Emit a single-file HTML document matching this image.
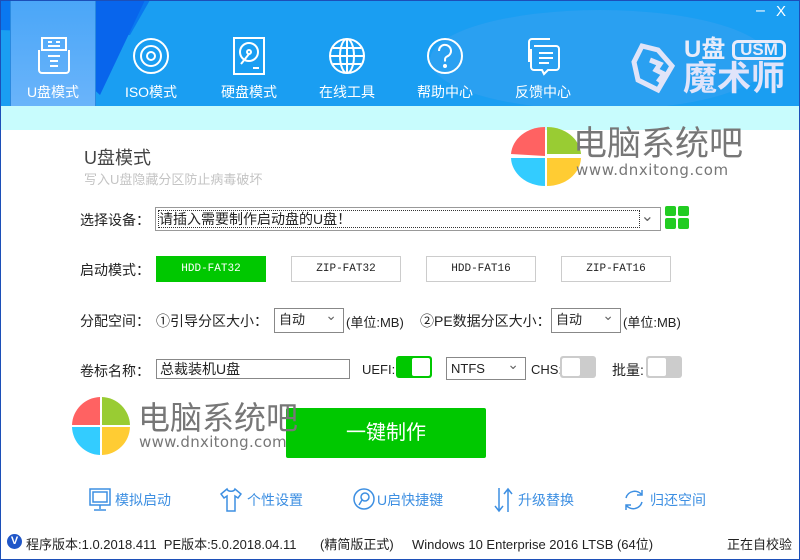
<!DOCTYPE html>
<html><head><meta charset="utf-8"><style>
*{margin:0;padding:0;box-sizing:border-box}
body{width:800px;height:560px;overflow:hidden;font-family:"Liberation Sans","Noto Sans CJK SC",sans-serif;background:#fff;position:relative;color:#222}
.a{position:absolute;white-space:nowrap}
#hdr{position:absolute;left:0;top:0;width:800px;height:106px;background:#1a9ef2;overflow:hidden}
.tab{position:absolute;top:0;width:86px;height:106px;color:#fff;font-size:14px;text-align:center}
.tab span{position:absolute;left:0;right:0;top:82px}
.tab svg{position:absolute;left:23px;top:36px}
.btn{position:absolute;top:256px;width:110px;height:26px;border:1px solid #ccc;font-family:"Liberation Mono",monospace;font-size:11px;text-align:center;line-height:24px;background:#fff}
.sel{position:absolute;border:1px solid #888;background:#fff;font-size:13px;padding-left:4px;line-height:22px}
.sel:after{content:"⌄";position:absolute;right:6px;top:-5px;color:#666;font-size:14px}
.tg{position:absolute;width:36px;height:22px;border-radius:3px;background:#ccc}
.tg i{position:absolute;top:2px;width:18px;height:18px;background:#fff;border-radius:2px}
.lk{position:absolute;top:490px;color:#3d8fe2;font-size:14px}
.l{font-size:14px}
</style></head><body>
<div id="hdr">
<svg class="a" style="left:0;top:0" width="800" height="106"><polygon points="0,0 150,0 130,35 0,30" fill="#0a78f0"/><polygon points="20,0 145,0 100,95 40,40" fill="#0865ec"/><ellipse cx="600" cy="60" rx="170" ry="50" fill="#3aa2ef" opacity=".5"/></svg>
<div class="tab" style="left:10px;background:linear-gradient(#4aa6f8,#6ab4fa);border-left:1px solid #2a8ae0;border-right:1px solid #2a8ae0"><svg width="40" height="40" viewBox="0 0 40 40" fill="none" stroke="#fff" stroke-width="2"><rect x="8" y="2" width="24" height="12"/><path d="M14 6h4M22 6h4M14 10h12"/><path d="M5 14v20a3 3 0 0 0 3 3h24a3 3 0 0 0 3-3V14"/><path d="M14 20h12M16 25h8M16 30h8"/></svg><span>U盘模式</span></div>
<div class="tab" style="left:108px"><svg width="40" height="40" viewBox="0 0 40 40" fill="none" stroke="#fff" stroke-width="2"><circle cx="20" cy="20" r="17"/><circle cx="20" cy="20" r="10"/><circle cx="20" cy="20" r="4"/></svg><span>ISO模式</span></div>
<div class="tab" style="left:206px"><svg width="40" height="40" viewBox="0 0 40 40" fill="none" stroke="#fff" stroke-width="2"><rect x="5" y="2" width="30" height="36"/><circle cx="20" cy="16" r="9"/><circle cx="20" cy="16" r="2"/><path d="M20 18l-8 10M24 32h6"/></svg><span>硬盘模式</span></div>
<div class="tab" style="left:304px"><svg width="40" height="40" viewBox="0 0 40 40" fill="none" stroke="#fff" stroke-width="2"><circle cx="20" cy="20" r="17"/><ellipse cx="20" cy="20" rx="7" ry="17"/><path d="M20 3v34M3 20h34M6 12h28M6 28h28"/></svg><span>在线工具</span></div>
<div class="tab" style="left:402px"><svg width="40" height="40" viewBox="0 0 40 40" fill="none" stroke="#fff" stroke-width="2"><circle cx="20" cy="20" r="17"/><path d="M14 15a6 6 0 1 1 8 5.5c-2 1-2 2-2 5"/><circle cx="20" cy="30" r="1" fill="#fff"/></svg><span>帮助中心</span></div>
<div class="tab" style="left:500px"><svg width="40" height="40" viewBox="0 0 40 40" fill="none" stroke="#fff" stroke-width="2"><path d="M6 26V6a3 3 0 0 1 3-3h18"/><path d="M11 10h22a3 3 0 0 1 3 3v18a3 3 0 0 1-3 3h-8l-4 4-2-4h-8a3 3 0 0 1-3-3V13"/><path d="M16 17h14M16 22h14M16 27h10"/></svg><span>反馈中心</span></div>
<div class="a" style="left:756px;top:2px;color:#fff;font-size:16px">–</div>
<div class="a" style="left:776px;top:3px;color:#fff;font-size:15px">X</div>
<svg class="a" style="left:628px;top:40px" width="60" height="56" viewBox="0 0 60 56" fill="none" stroke="#e0e4f8" stroke-width="5"><path d="M14 6L30 10L44 26L30 50L10 40L6 22Z"/><path d="M22 20l10 4-4 6 8 4-6 8"/></svg>
<div class="a" style="left:684px;top:36px;color:#e8ecfa;font-size:24px;font-weight:bold;line-height:28px">U盘</div>
<div class="a" style="left:732px;top:40px;width:54px;height:20px;border:3px solid #e8ecfa;border-radius:6px;color:#e8ecfa;font-size:17px;font-weight:bold;line-height:14px;text-align:center">USM</div>
<div class="a" style="left:683px;top:60px;color:#e0e4fa;font-size:34px;font-weight:bold;line-height:38px">魔术师</div>
</div>
<div class="a" style="left:0;top:106px;width:800px;height:24px;background:#c8fcfd"></div>
<div class="a" style="left:0;top:0;width:800px;height:560px;border:1px solid #1c4fb8;pointer-events:none"></div>

<div class="a" style="left:84px;top:144px;font-size:18px;color:#444">U盘模式</div>
<div class="a" style="left:84px;top:169px;font-size:13px;color:#c4c4c4">写入U盘隐藏分区防止病毒破坏</div>

<svg class="a" style="left:509px;top:125px" width="74" height="62"><path d="M36 31V2A34 29 0 0 0 2 29Z" fill="#ff6262"/><path d="M38 29V2A34 29 0 0 1 72 29Z" fill="#99cc33"/><path d="M36 33H2A34 29 0 0 0 36 61Z" fill="#33ccff"/><path d="M38 33H72A34 29 0 0 1 38 61Z" fill="#ffcc33"/></svg>
<div class="a" style="left:573px;top:124px;font-size:34px;color:#777;line-height:40px">电脑系统吧</div>
<div class="a" style="left:576px;top:161px;font-size:15px;color:#777;font-family:'DejaVu Sans',sans-serif;letter-spacing:.6px">www.dnxitong.com</div>

<div class="a l" style="left:80px;top:210px">选择设备：</div>
<div class="a" style="left:155px;top:207px;width:506px;height:24px;border:1px solid #999;background:#fff"><div style="position:absolute;left:2px;top:2px;width:482px;height:18px;border:1px dotted #333;font-size:14px;line-height:16px">请插入需要制作启动盘的U盘！</div><span style="position:absolute;right:6px;top:-2px;color:#666">⌄</span></div>
<svg class="a" style="left:665px;top:206px" width="26" height="24"><rect x="0" y="0" width="11" height="10" rx="2" fill="#22cc22"/><rect x="13" y="0" width="11" height="10" rx="2" fill="#22cc22"/><rect x="0" y="12" width="11" height="11" rx="2" fill="#22cc22"/><rect x="13" y="12" width="11" height="11" rx="2" fill="#22cc22"/></svg>

<div class="a l" style="left:80px;top:260px">启动模式：</div>
<div class="btn" style="left:156px;background:#00c800;border-color:#00c800;color:#fff">HDD-FAT32</div>
<div class="btn" style="left:291px">ZIP-FAT32</div>
<div class="btn" style="left:426px">HDD-FAT16</div>
<div class="btn" style="left:561px">ZIP-FAT16</div>

<div class="a l" style="left:80px;top:311px">分配空间：</div>
<div class="a l" style="left:156px;top:311px">①引导分区大小：</div>
<div class="sel" style="left:274px;top:308px;width:70px;height:25px">自动</div>
<div class="a" style="left:346px;top:312px;font-size:13px">(单位:MB)</div>
<div class="a l" style="left:420px;top:311px">②PE数据分区大小：</div>
<div class="sel" style="left:551px;top:308px;width:70px;height:25px">自动</div>
<div class="a" style="left:623px;top:312px;font-size:13px">(单位:MB)</div>

<div class="a l" style="left:80px;top:361px">卷标名称：</div>
<div class="a" style="left:156px;top:359px;width:194px;height:20px;border:1px solid #888;font-size:14px;line-height:18px;padding-left:3px">总裁装机U盘</div>
<div class="a" style="left:362px;top:362px;font-size:13px">UEFI:</div>
<div class="tg" style="left:396px;top:356px;background:#00c800"><i style="left:16px"></i></div>
<div class="sel" style="left:446px;top:357px;width:80px;height:23px">NTFS</div>
<div class="a" style="left:531px;top:362px;font-size:13px">CHS:</div>
<div class="tg" style="left:560px;top:356px"><i style="left:2px"></i></div>
<div class="a l" style="left:612px;top:360px">批量:</div>
<div class="tg" style="left:646px;top:356px"><i style="left:2px"></i></div>

<div class="a" style="left:286px;top:408px;width:200px;height:50px;background:#00c800;border-radius:2px;color:#fff;font-size:20px;text-align:center;line-height:50px">一键制作</div>
<svg class="a" style="left:71px;top:396px" width="60" height="60"><path d="M29 29V1A29 29 0 0 0 1 29Z" fill="#ff6262"/><path d="M31 29V1A29 29 0 0 1 59 29Z" fill="#99cc33"/><path d="M29 31H1A29 29 0 0 0 29 59Z" fill="#33ccff"/><path d="M31 31H59A29 29 0 0 1 31 59Z" fill="#ffcc33"/></svg>
<div class="a" style="left:138px;top:398px;font-size:32px;color:#777;line-height:40px">电脑系统吧</div>
<div class="a" style="left:139px;top:433px;font-size:15px;color:#777;font-family:'DejaVu Sans',sans-serif;letter-spacing:.3px">www.dnxitong.com</div>

<svg class="a" style="left:88px;top:487px" width="24" height="26" fill="none" stroke="#3d8fe2" stroke-width="1.5"><rect x="2" y="2" width="20" height="16"/><rect x="5" y="5" width="14" height="10"/><path d="M12 18v4M6 23h12"/></svg>
<div class="lk" style="left:115px">模拟启动</div>
<svg class="a" style="left:220px;top:487px" width="22" height="26" fill="none" stroke="#3d8fe2" stroke-width="1.5"><path d="M7 2L1 7l3 4 3-2v15h8V9l3 2 3-4-6-5c-1 3-7 3-8 0z"/></svg>
<div class="lk" style="left:247px">个性设置</div>
<svg class="a" style="left:352px;top:487px" width="24" height="24" fill="none" stroke="#3d8fe2" stroke-width="1.5"><circle cx="12" cy="12" r="10"/><circle cx="13" cy="10" r="4"/><path d="M10 13l-3 5"/></svg>
<div class="lk" style="left:377px">U启快捷键</div>
<svg class="a" style="left:492px;top:486px" width="24" height="28" fill="none" stroke="#3d8fe2" stroke-width="1.5"><path d="M7 2v22M3 20l4 5 4-5M16 26V4M12 8l4-5 4 5"/></svg>
<div class="lk" style="left:518px">升级替换</div>
<svg class="a" style="left:622px;top:487px" width="24" height="26" fill="none" stroke="#3d8fe2" stroke-width="1.5"><path d="M4 11a9 9 0 0 1 16-3M20 15a9 9 0 0 1-16 3M20 3v5h-5M4 23v-5h5"/></svg>
<div class="lk" style="left:650px">归还空间</div>

<div class="a" style="left:7px;top:534px;width:15px;height:15px;border-radius:50%;background:#1f56c8;color:#fff;font-size:11px;text-align:center;line-height:15px;font-weight:bold">V</div>
<div class="a" style="left:26px;top:534px;font-size:13px">程序版本:1.0.2018.411&nbsp;&nbsp;PE版本:5.0.2018.04.11</div>
<div class="a" style="left:320px;top:534px;font-size:13px">(精简版正式)</div>
<div class="a" style="left:412px;top:534px;font-size:13px">Windows 10 Enterprise 2016 LTSB (64位)</div>
<div class="a" style="left:727px;top:534px;font-size:13px">正在自校验</div>
</body></html>
